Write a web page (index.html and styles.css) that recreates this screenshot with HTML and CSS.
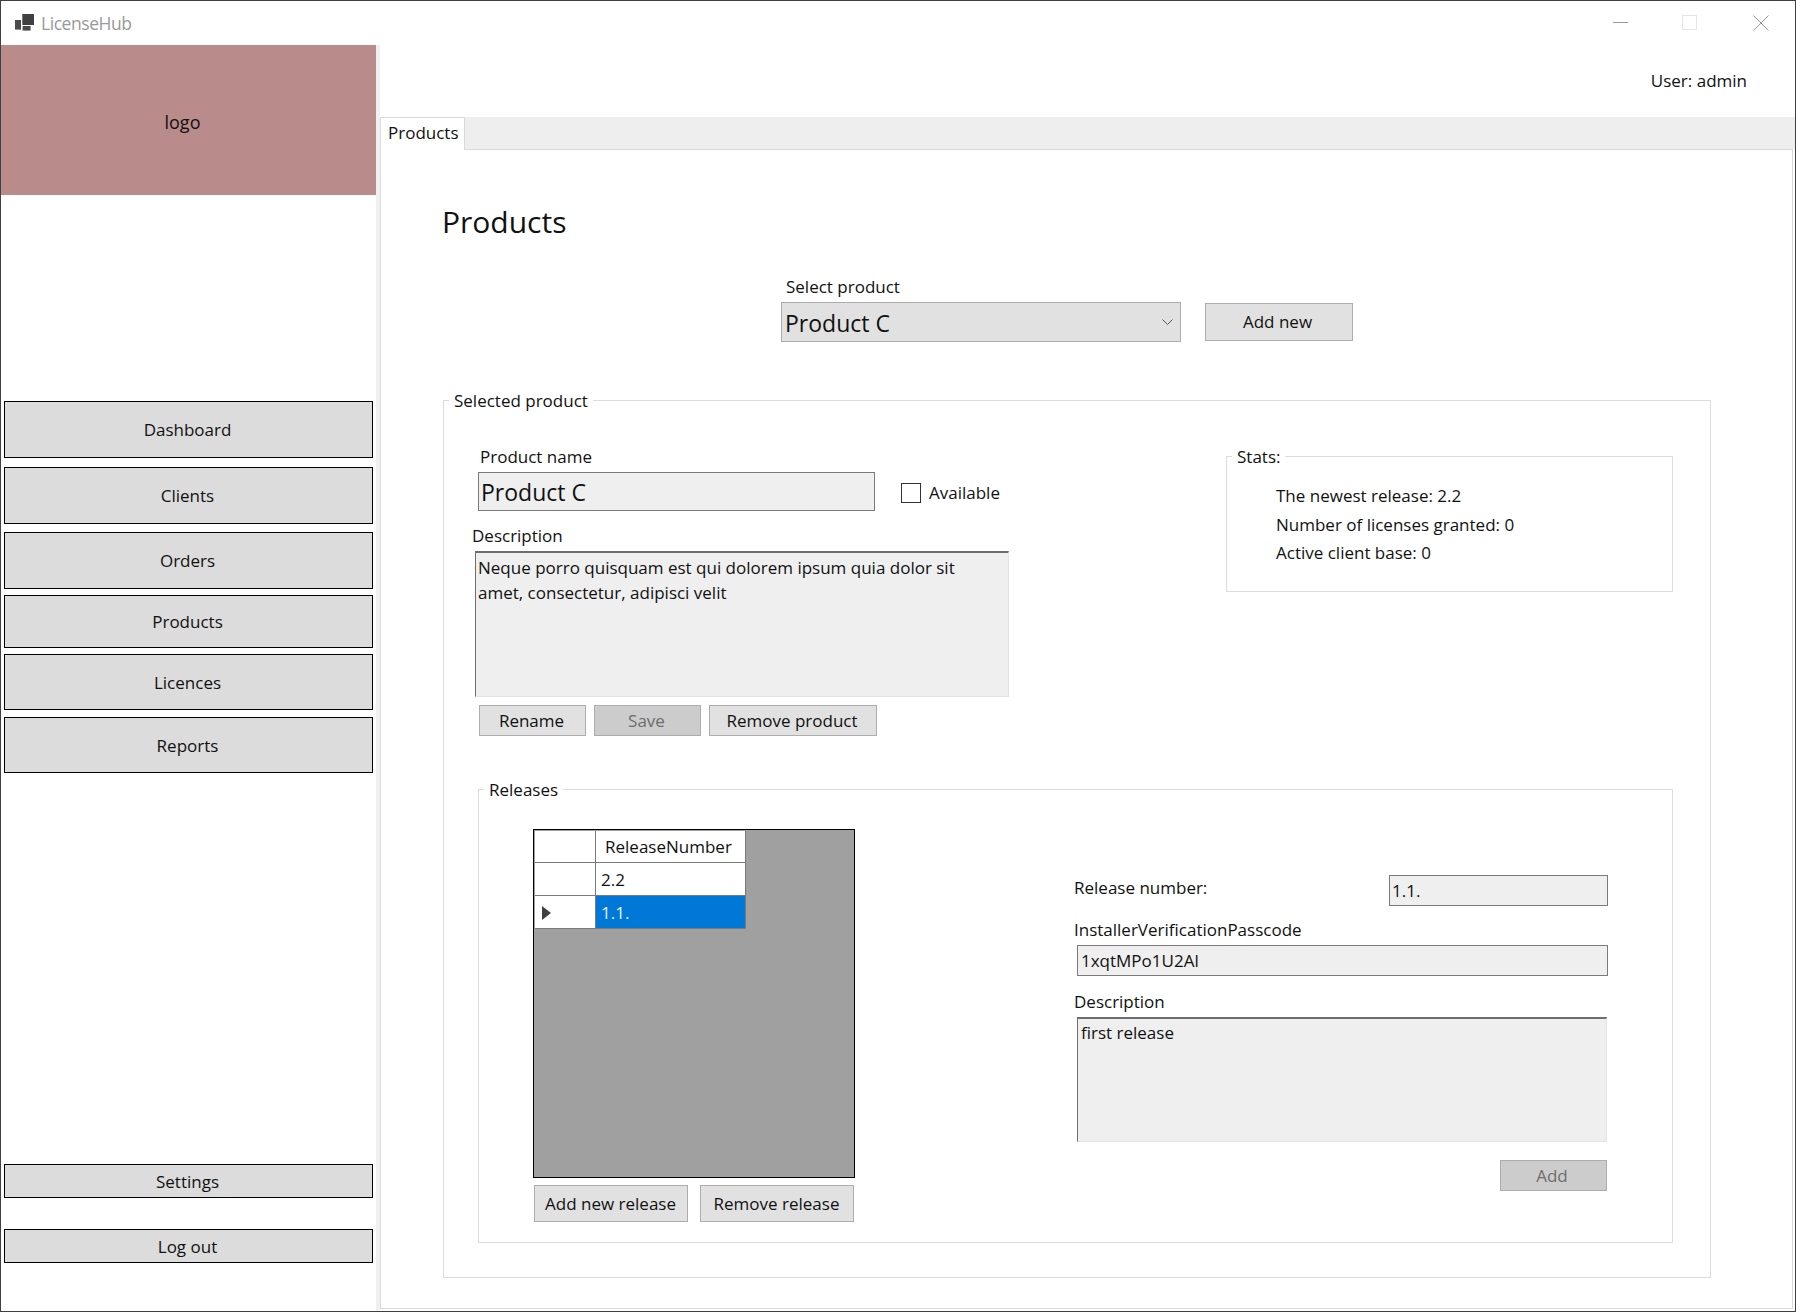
FILE: index.html
```html
<!DOCTYPE html>
<html lang="en">
<head>
<meta charset="utf-8">
<title>LicenseHub</title>
<link rel="stylesheet" href="styles.css">
</head>
<body>
<div class="window">
  <header class="titlebar">
    <svg class="app-icon" width="19" height="17" viewBox="0 0 19 17"><rect fill="#404040" x="7.300" y="0" width="11.700" height="11"/><rect fill="#4a4a4a" x="0" y="6" width="6" height="9.600"/><rect fill="#4a4a4a" x="7.600" y="12" width="8" height="4.600"/></svg>
    <span class="app-title">LicenseHub</span>
    <div class="win-controls">
      <svg class="win-min" width="15" height="15" viewBox="0 0 15 15"><path d="M0 7.500h15" stroke="#999" fill="none"/></svg>
      <svg class="win-max" width="15" height="15" viewBox="0 0 15 15"><rect x=".5" y=".5" width="14" height="14" stroke="#e5e5e5" fill="none"/></svg>
      <svg class="win-close" width="16" height="16" viewBox="0 0 16 16"><path d="M.5.5l15 15M15.500.5l-15 15" stroke="#999" fill="none"/></svg>
    </div>
  </header>
  <div class="main">
    <aside class="sidebar">
      <div class="logo">logo</div>
      <nav class="nav">
        <div class="nav-btn nav-dashboard">Dashboard</div>
        <div class="nav-btn nav-clients">Clients</div>
        <div class="nav-btn nav-orders">Orders</div>
        <div class="nav-btn nav-products">Products</div>
        <div class="nav-btn nav-licences">Licences</div>
        <div class="nav-btn nav-reports">Reports</div>
      </nav>
      <div class="nav-bottom">
        <div class="nav-btn nav-small">Settings</div>
        <div class="nav-btn nav-small">Log out</div>
      </div>
    </aside>
    <div class="gutter"></div>
    <section class="content">
      <div class="userbar">User: admin</div>
      <div class="tabstrip"><div class="tab">Products</div></div>
      <div class="panel">
        <h1 class="title">Products</h1>
        <div class="select-row">
          <div class="select-col">
            <div class="label">Select product</div>
            <div class="combo">
              <span>Product C</span>
              <svg class="chevron" width="11" height="6" viewBox="0 0 11 6"><path d="M.5.5L5.500 5.500 10.500.5" stroke="#555" fill="none"/></svg>
            </div>
          </div>
          <div class="btn btn-addnew">Add new</div>
        </div>

        <div class="group group-selected">
          <div class="legend">Selected product</div>
          <div class="top-section">
            <div class="product-form">
              <div class="label label-name">Product name</div>
              <div class="name-row">
                <div class="textbox textbox-name">Product C</div>
                <div class="checkbox"></div>
                <div class="check-label">Available</div>
              </div>
              <div class="label label-desc">Description</div>
              <div class="textarea textarea-product">Neque porro quisquam est qui dolorem ipsum quia dolor sit amet, consectetur, adipisci velit</div>
              <div class="form-actions">
                <div class="btn btn-form">Rename</div>
                <div class="btn btn-form btn-disabled">Save</div>
                <div class="btn btn-remove">Remove product</div>
              </div>
            </div>
            <div class="group group-stats">
              <div class="legend">Stats:</div>
              <div class="stat-line">The newest release: 2.2</div>
              <div class="stat-line">Number of licenses granted: 0</div>
              <div class="stat-line">Active client base: 0</div>
            </div>
          </div>

          <div class="group group-releases">
            <div class="legend">Releases</div>
            <div class="release-list">
              <div class="dgv">
                <div class="dgv-table">
                  <div class="cell row-head"></div>
                  <div class="cell col-head">ReleaseNumber</div>
                  <div class="cell row-head"></div>
                  <div class="cell data">2.2</div>
                  <div class="cell row-head"><span class="arrow"></span></div>
                  <div class="cell data selected">1.1.</div>
                </div>
              </div>
              <div class="list-actions">
                <div class="btn btn-list">Add new release</div>
                <div class="btn btn-list">Remove release</div>
              </div>
            </div>
            <div class="release-form">
              <div class="number-row">
                <div class="label-number">Release number:</div>
                <div class="textbox textbox-number">1.1.</div>
              </div>
              <div class="label label-passcode">InstallerVerificationPasscode</div>
              <div class="textbox textbox-passcode">1xqtMPo1U2Al</div>
              <div class="label label-rdesc">Description</div>
              <div class="textarea textarea-release">first release</div>
              <div class="btn btn-form btn-disabled btn-add">Add</div>
            </div>
          </div>
        </div>
      </div>
    </section>
  </div>
</div>
</body>
</html>
```
FILE: styles.css
```css
* { box-sizing: border-box; }
html, body { margin: 0; padding: 0; height: 100%; overflow: hidden; background: #fff; }
body {
  font-family: "Open Sans", "Noto Sans", sans-serif;
  font-size: 17px;
  line-height: 24px;
  color: #111;
}
.window {
  width: 1796px;
  height: 1312px;
  border: 1px solid #404040;
  display: flex;
  flex-direction: column;
  overflow: hidden;
  background: #fff;
}
.titlebar {
  height: 44px;
  flex: none;
  display: flex;
  align-items: center;
  padding-left: 14px;
}
.app-icon { flex: none; margin-top: -1px; }
.app-title { margin-left: 7px; color: #999; font-size: 17.5px; letter-spacing: -0.45px; }
.win-controls { margin-left: auto; display: flex; align-items: center; margin-right: 26px; margin-top: -1px; }
.win-max { margin-left: 54px; }
.win-close { margin-left: 56px; }

.main { flex: 1; display: flex; min-height: 0; }
.sidebar { width: 375px; flex: none; display: flex; flex-direction: column; }
.logo {
  height: 150px;
  flex: none;
  background: #b98b8b;
  display: flex;
  align-items: center;
  justify-content: center;
  padding: 4px 12px 0 0;
  font-size: 18px;
}
.nav { margin: 206px 0 0 3px; width: 369px; display: flex; flex-direction: column; }
.nav-btn {
  background: #dcdcdc;
  border: 1px solid #000;
  display: flex;
  align-items: center;
  justify-content: center;
  padding: 1px 2px 0 0;
}
.nav-dashboard { height: 57px; }
.nav-clients { height: 57px; margin-top: 9px; }
.nav-orders { height: 57px; margin-top: 8px; }
.nav-products { height: 53px; margin-top: 6px; }
.nav-licences { height: 56px; margin-top: 6px; }
.nav-reports { height: 56px; margin-top: 7px; }
.nav-bottom {
  margin: auto 0 48px 3px;
  width: 369px;
  display: flex;
  flex-direction: column;
  gap: 31px;
}
.nav-small { height: 34px; }
.gutter { width: 4px; flex: none; background: #f0f0f0; }

.content { flex: 1; min-width: 0; display: flex; flex-direction: column; }
.userbar {
  height: 72px;
  flex: none;
  text-align: right;
  padding: 24px 48px 0 0;
}
.tabstrip { height: 32px; flex: none; background: #eee; display: flex; }
.tab {
  width: 85px;
  height: 33px;
  background: #fff;
  border: 1px solid #d9d9d9;
  border-bottom: 0;
  padding: 3px 0 0 7px;
  position: relative;
  z-index: 1;
}
.panel {
  flex: 1;
  margin: 0 2px 2px 0;
  border: 1px solid #d9d9d9;
  padding: 50px 0 0 62px;
  min-height: 0;
  background: #fff;
}
.title { margin: 0 0 0 -1px; font-size: 30px; line-height: 44px; font-weight: 400; }
.select-row { margin: 32px 0 0 338px; display: flex; align-items: flex-end; gap: 24px; }
.label { line-height: 24px; }
.select-col .label { padding-left: 5px; margin-top: -1px; padding-bottom: 1px; }
.combo {
  width: 400px;
  height: 40px;
  margin-top: 2px;
  background: #e1e1e1;
  border: 1px solid #adadad;
  font-size: 23px;
  padding-left: 3px;
  display: flex;
  align-items: center;
  justify-content: space-between;
}
.combo span { padding-top: 1px; }
.chevron { margin-right: 7px; }
.btn {
  background: #e1e1e1;
  border: 1px solid #adadad;
  display: flex;
  align-items: center;
  justify-content: center;
}
.btn-addnew { width: 148px; height: 38px; margin-bottom: 1px; padding-right: 3px; }

.group { border: 1px solid #dcdcdc; position: relative; }
.legend {
  position: absolute;
  top: -12px;
  left: 5px;
  padding: 0 5px;
  background: #fff;
  white-space: nowrap;
}
.group-selected {
  width: 1268px;
  margin-top: 58px;
  padding: 0 37px 34px 34px;
}
.top-section { height: 388px; display: flex; justify-content: space-between; align-items: flex-start; }
.product-form { margin-top: 44px; }
.label-name { padding-left: 2px; }
.name-row { margin-top: 3px; display: flex; align-items: center; }
.textbox {
  background: #efefef;
  border: 1px solid #7a7a7a;
  display: flex;
  align-items: center;
}
.textbox-name { width: 397px; height: 39px; font-size: 23px; padding-left: 2px; }
.checkbox { width: 20px; height: 20px; margin: 3px 0 0 26px; border: 1px solid #333; background: #fff; }
.check-label { margin: 3px 0 0 8px; }
.label-desc { margin: 13px 0 0 -6px; }
.textarea {
  background: #efefef;
  border-style: solid;
  border-color: #6e6e6e #e3e3e3 #e3e3e3 #6e6e6e;
  border-width: 2px 1px 1px 1px;
  padding: 2px 2px;
}
.textarea-product { width: 534px; height: 146px; margin: 3px 0 0 -3px; padding-right: 30px; line-height: 25px; }
.form-actions { margin: 8px 0 0 1px; display: flex; gap: 8px; }
.btn-form { width: 107px; height: 31px; padding-right: 2px; }
.btn-remove { width: 168px; height: 31px; padding-right: 2px; }
.btn-disabled { background: #ccc; color: #6d6d6d; }
.group-stats { width: 447px; height: 136px; margin-top: 55px; padding: 25px 0 0 49px; }
.stat-line { line-height: 28.500px; }

.group-releases { height: 454px; padding: 39px 0 0 54px; display: flex; align-items: flex-start; }
.release-list { width: 322px; flex: none; }
.dgv { height: 349px; background: #a0a0a0; border: 1px solid #000; padding: 1px; }
.dgv-table { display: grid; grid-template-columns: 61px 150px; grid-template-rows: 32px 33px 33px; width: 211px; }
.cell { background: #fff; border-right: 1px solid #7a7a7a; border-bottom: 1px solid #7a7a7a; display: flex; align-items: center; padding-top: 1px; }
.col-head { padding-left: 9px; }
.data { padding-left: 5px; }
.selected { background: #0078d7; color: #e6f2fb; }
.row-head { padding-left: 7px; }
.arrow {
  width: 0;
  height: 0;
  border-left: 9px solid #404040;
  border-top: 7px solid transparent;
  border-bottom: 7px solid transparent;
}
.list-actions { margin: 7px 0 0 1px; display: flex; gap: 12px; }
.btn-list { width: 154px; height: 37px; padding-right: 1px; }
.release-form { width: 533px; margin: 46px 0 0 220px; flex: none; }
.number-row { display: flex; justify-content: space-between; align-items: flex-start; }
.label-number { line-height: 26px; margin-left: -1px; }
.textbox-number { width: 219px; height: 31px; padding-left: 2px; }
.label-passcode { margin: 12px 0 0 -1px; }
.textbox-passcode { width: 531px; height: 31px; margin: 3px 0 0 2px; padding-left: 3px; }
.label-rdesc { margin: 14px 0 0 -1px; }
.textarea-release { width: 530px; height: 125px; margin: 3px 0 0 2px; padding: 2px 3px; }
.btn-add { margin: 18px 0 0 425px; padding-right: 3px; }
```
